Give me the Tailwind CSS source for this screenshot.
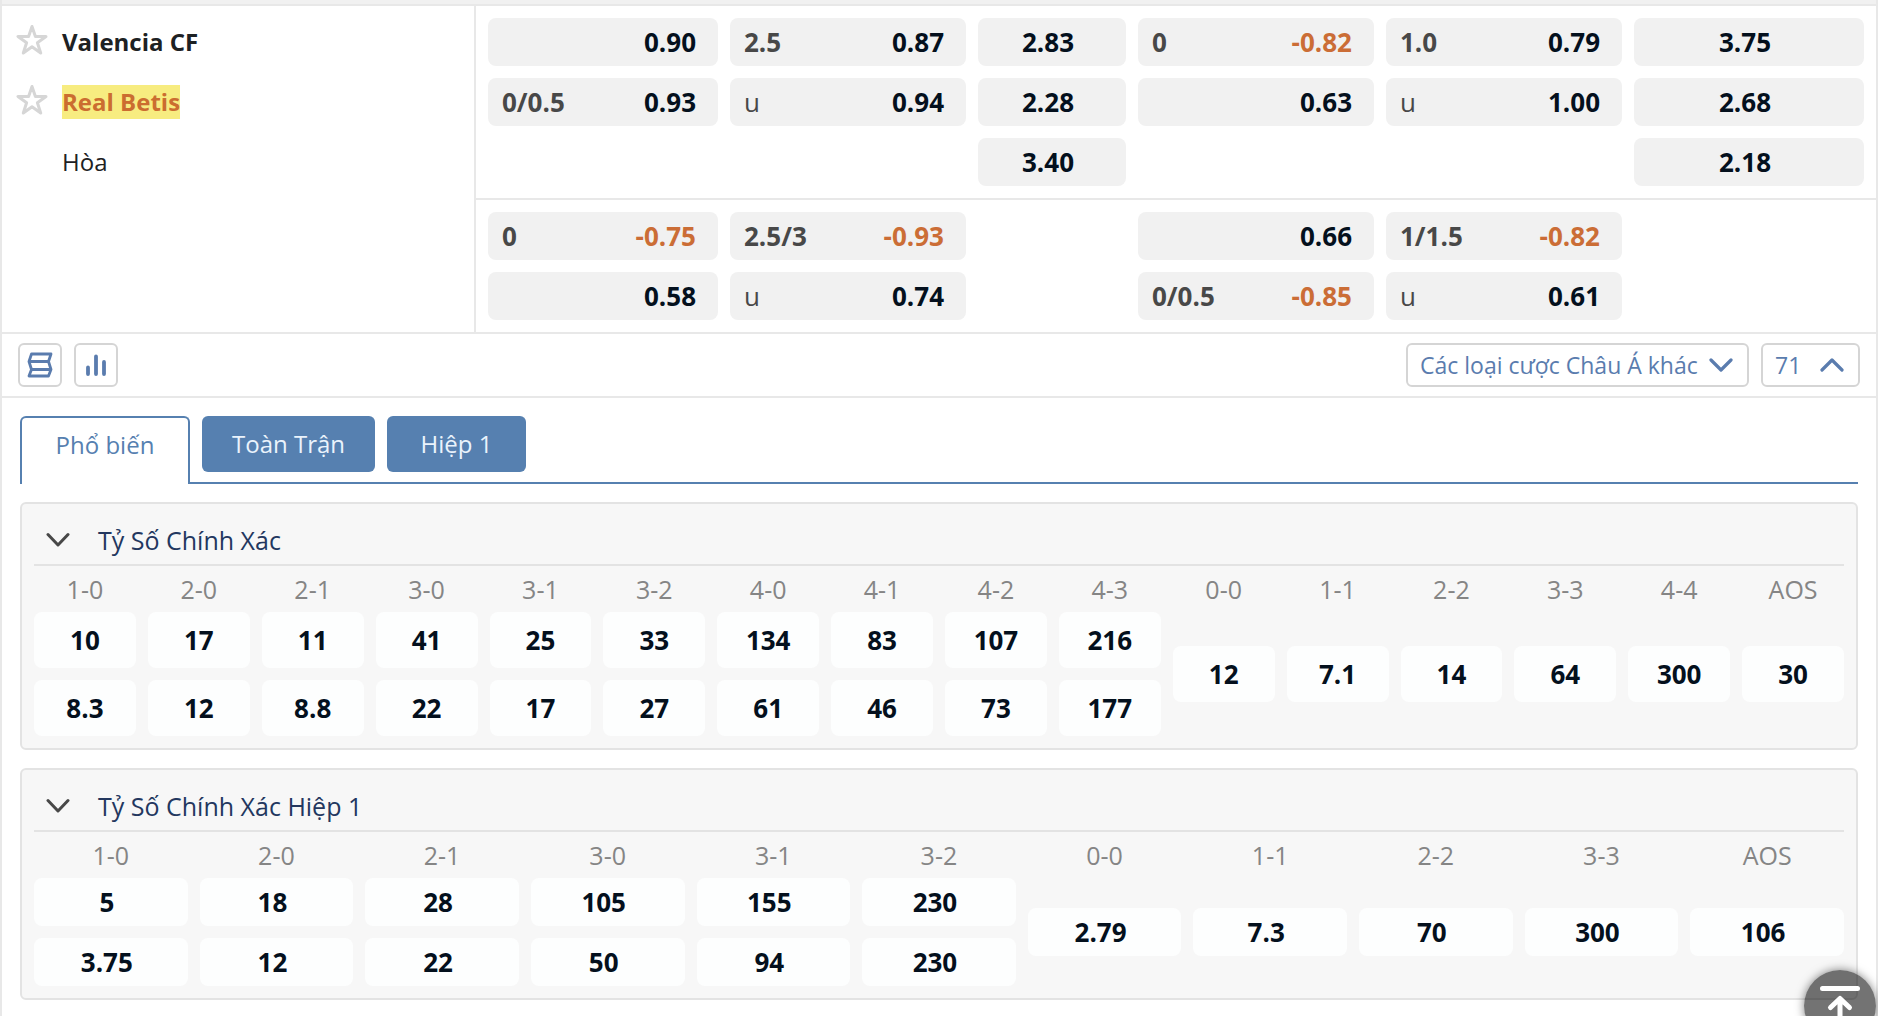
<!DOCTYPE html>
<html lang="vi">
<head>
    <meta charset="UTF-8">
    <meta name="viewport" content="width=device-width, initial-scale=1.0">
    <title>Valencia CF - Real Betis</title>
    <script src="https://cdn.jsdelivr.net/npm/@tailwindcss/browser@4"></script>
</head>
<body class="bg-white font-['Open_Sans','Noto_Sans',sans-serif] text-[24px] leading-8 text-[#1d2123]">
    <div class="min-h-screen border-x-2 border-[#e8e8e8]">
        <div class="h-1 bg-[#f1f1f1]"></div>

        <!-- Match odds -->
        <section class="flex border-y-2 border-[#e8e8e8]">
            <div class="w-[474px] shrink-0 border-r-2 border-[#e8e8e8] px-3.5 py-3">
                <div class="flex h-12 items-center gap-3.5">
                    <button type="button" aria-label="Valencia CF" class="pb-1">
                        <svg class="h-8 w-8" viewBox="0 0 32 32" fill="none" stroke="#d6d6d6" stroke-width="3" stroke-linejoin="round"><path d="M16 2.5l3.4 10H30l-8.600 6.300 3.300 10.200-8.700-6.300L7.300 29l3.300-10.200L2 12.500h10.600z"/></svg>
                    </button>
                    <span class="font-bold">Valencia CF</span>
                </div>
                <div class="mt-3 flex h-12 items-center gap-3.5">
                    <button type="button" aria-label="Real Betis" class="pb-1">
                        <svg class="h-8 w-8" viewBox="0 0 32 32" fill="none" stroke="#d6d6d6" stroke-width="3" stroke-linejoin="round"><path d="M16 2.5l3.4 10H30l-8.600 6.300 3.300 10.200-8.700-6.300L7.300 29l3.300-10.200L2 12.500h10.600z"/></svg>
                    </button>
                    <span class="bg-[#f7ec80] py-px font-bold text-[#cb6d30]">Real Betis</span>
                </div>
                <div class="mt-3 flex h-12 items-center pl-[46px]">Hòa</div>
            </div>
            <div class="flex-1">
                <div id="oddsMain" class="grid grid-cols-[230fr_236fr_148fr_236fr_236fr_230fr] gap-3 border-b-2 border-[#e8e8e8] p-3 text-[26px]"></div>
                <div id="oddsAlt" class="grid grid-cols-[230fr_236fr_148fr_236fr_236fr_230fr] gap-3 p-3 text-[26px]"></div>
            </div>
        </section>

        <!-- Toolbar -->
        <section class="flex items-center justify-between border-b-2 border-[#e8e8e8] px-4 py-[9px] text-[#5a7cae]">
            <div class="flex gap-3">
                <button type="button" aria-label="Luật" class="flex h-11 w-11 items-center justify-center rounded-md border-2 border-[#d5d5d5]">
                    <svg class="h-7 w-7" viewBox="0 0 28 28" fill="none" stroke="currentColor" stroke-width="2.800" stroke-linejoin="round"><path d="M5.500 3H25l-2.500 7.500L25 18.500 22.500 25H3l2.500-6.500L3 10.500z"/><path d="M3 10.500h19.500M5.500 18.500H25"/></svg>
                </button>
                <button type="button" aria-label="Thống kê" class="flex h-11 w-11 items-center justify-center rounded-md border-2 border-[#d5d5d5]">
                    <svg class="h-7 w-7" viewBox="0 0 28 28" fill="none" stroke="currentColor" stroke-width="3.800" stroke-linecap="round"><path d="M6 16.500v6.500M14 5.500V23M22 11v12"/></svg>
                </button>
            </div>
            <div class="flex gap-3">
                <div class="relative">
                    <select aria-label="Các loại cược" class="h-11 w-[343px] appearance-none rounded-md border-2 border-[#d5d5d5] bg-white pl-3 text-[23px]">
                        <option>Các loại cược Châu Á khác</option>
                    </select>
                    <svg class="pointer-events-none absolute top-2.5 right-4 h-6 w-6" viewBox="0 0 24 24" fill="none" stroke="currentColor" stroke-width="3.200" stroke-linecap="round" stroke-linejoin="round"><path d="M2 7l10 10L22 7"/></svg>
                </div>
                <button type="button" class="flex h-11 w-[99px] items-center justify-between rounded-md border-2 border-[#d5d5d5] pr-3.5 pl-3 text-[23px]">
                    71
                    <svg class="h-6 w-6" viewBox="0 0 24 24" fill="none" stroke="currentColor" stroke-width="3.200" stroke-linecap="round" stroke-linejoin="round"><path d="M2 17L12 7l10 10"/></svg>
                </button>
            </div>
        </section>

        <main class="px-[18px] pt-[18px] pb-3">
            <!-- Tabs -->
            <div class="flex">
                <button type="button" class="h-[68px] w-[170px] rounded-t-md border-2 border-b-0 border-[#5680b0] pb-3 text-[#5680b0]">Phổ biến</button>
                <div class="flex flex-1 gap-3 border-b-2 border-[#5680b0] pl-3 text-[#eaf3fc]">
                    <button type="button" class="h-14 w-[173px] rounded-md bg-[#5680b0]">Toàn Trận</button>
                    <button type="button" class="h-14 w-[139px] rounded-md bg-[#5680b0]">Hiệp 1</button>
                </div>
            </div>

            <div id="markets" class="mt-[18px] space-y-[18px]"></div>
        </main>
    </div>

    <button type="button" aria-label="Lên đầu trang" class="fixed right-0.5 -bottom-[26px] h-[72px] w-[72px] rounded-full bg-black/55 shadow-[0_0_10px_rgba(0,0,0,0.5)]">
        <svg viewBox="0 0 72 72" fill="none" stroke="#fff" stroke-width="5" stroke-linecap="round" stroke-linejoin="round"><path d="M18.500 18.500h35M36 29v28M26.500 37.500L36 28.500l9.500 9"/></svg>
    </button>

    <script>
        // [handicap, price], null = no bet in that slot
        const oddsMain = [
            [['', '0.90'], ['2.5', '0.87'], ['2.83'], ['0', '-0.82'], ['1.0', '0.79'], ['3.75']],
            [['0/0.5', '0.93'], ['u', '0.94'], ['2.28'], ['', '0.63'], ['u', '1.00'], ['2.68']],
            [null, null, ['3.40'], null, null, ['2.18']],
        ];
        const oddsAlt = [
            [['0', '-0.75'], ['2.5/3', '-0.93'], null, ['', '0.66'], ['1/1.5', '-0.82'], null],
            [['', '0.58'], ['u', '0.74'], null, ['0/0.5', '-0.85'], ['u', '0.61'], null],
        ];

        const markets = [
            {
                title: 'Tỷ Số Chính Xác',
                height: 'h-14',
                pad: '',
                heads: ['1-0', '2-0', '2-1', '3-0', '3-1', '3-2', '4-0', '4-1', '4-2', '4-3', '0-0', '1-1', '2-2', '3-3', '4-4', 'AOS'],
                home: ['10', '17', '11', '41', '25', '33', '134', '83', '107', '216'],
                away: ['8.3', '12', '8.8', '22', '17', '27', '61', '46', '73', '177'],
                draw: ['12', '7.1', '14', '64', '300', '30'],
            },
            {
                title: 'Tỷ Số Chính Xác Hiệp 1',
                height: 'h-12',
                pad: 'pr-2',
                heads: ['1-0', '2-0', '2-1', '3-0', '3-1', '3-2', '0-0', '1-1', '2-2', '3-3', 'AOS'],
                home: ['5', '18', '28', '105', '155', '230'],
                away: ['3.75', '12', '22', '50', '94', '230'],
                draw: ['2.79', '7.3', '70', '300', '106'],
            },
        ];

        function oddsCell(cell) {
            if (!cell) return '<div></div>';
            if (cell.length === 1) {
                return `<button type="button" class="h-12 rounded-lg bg-[#f1f1f1] pr-2 font-bold text-[#04101d]">${cell[0]}</button>`;
            }
            const [hdp, price] = cell;
            const weight = hdp === 'u' ? 'font-normal' : 'font-bold';
            const color = price.startsWith('-') ? 'text-[#cb6d36]' : 'text-[#04101d]';
            return `<button type="button" class="flex h-12 items-center justify-between rounded-lg bg-[#f1f1f1] pr-[22px] pl-3.5">
                <span class="${weight} text-[#484848]">${hdp}</span>
                <span class="font-bold ${color}">${price}</span>
            </button>`;
        }

        function scoreCell(market, value, rows) {
            return `<td rowspan="${rows}" class="p-0 pb-3"><button type="button" class="block w-full rounded-lg bg-[#fdfefe] text-[26px] font-bold text-[#04101d] ${market.height} ${market.pad}">${value}</button></td>`;
        }

        function marketPanel(market) {
            return `<section class="rounded-md border-2 border-[#e3e3e3] bg-[#f7f7f7] px-3">
                <h2 class="flex items-end gap-7 border-b-2 border-[#e3e3e3] pt-5 pb-2 pl-3 text-[25px] text-[#23375f]">
                    <svg class="mb-1 h-6 w-6" viewBox="0 0 24 24" fill="none" stroke="#484848" stroke-width="3" stroke-linecap="round" stroke-linejoin="round"><path d="M2 6.500l10 10.500 10-10.500"/></svg>
                    ${market.title}
                </h2>
                <div class="-mx-3">
                    <table class="w-full table-fixed border-separate border-spacing-x-3 border-spacing-y-0">
                        <thead>
                            <tr>${market.heads.map((h) => `<th class="h-[46px] p-0 text-[25px] font-normal text-[#858585]">${h}</th>`).join('')}</tr>
                        </thead>
                        <tbody>
                            <tr>${market.home.map((v) => scoreCell(market, v, 1)).join('')}${market.draw.map((v) => scoreCell(market, v, 2)).join('')}</tr>
                            <tr>${market.away.map((v) => scoreCell(market, v, 1)).join('')}</tr>
                        </tbody>
                    </table>
                </div>
            </section>`;
        }

        document.getElementById('oddsMain').innerHTML = oddsMain.flat().map(oddsCell).join('');
        document.getElementById('oddsAlt').innerHTML = oddsAlt.flat().map(oddsCell).join('');
        document.getElementById('markets').innerHTML = markets.map(marketPanel).join('');
    </script>
</body>
</html>
